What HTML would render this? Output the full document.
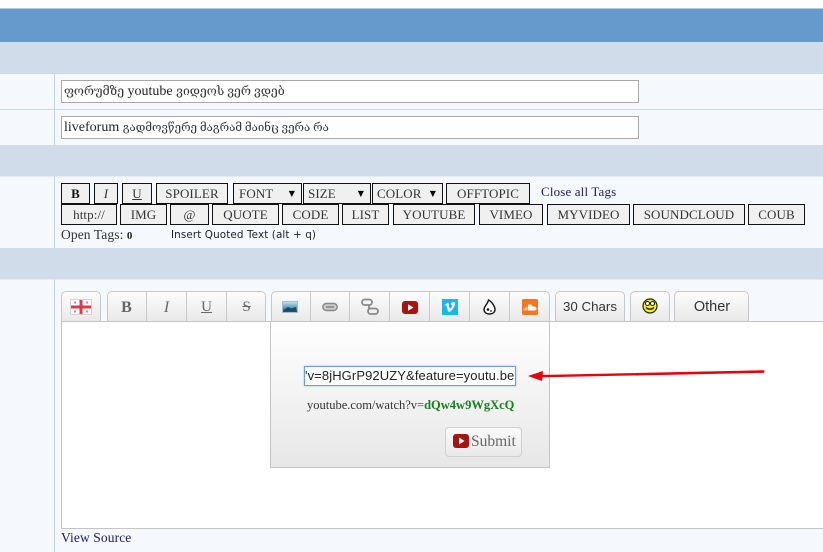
<!DOCTYPE html>
<html>
<head>
<meta charset="utf-8">
<style>
html,body{margin:0;padding:0;width:823px;height:552px;overflow:hidden;background:#fff}
body{position:relative;font-family:"Liberation Serif","DejaVu Serif","Noto Serif CJK SC",serif;color:#222}
div,span.a,svg.a{position:absolute;box-sizing:border-box}
.band{left:0;width:823px;background:#d1dceb}
.row{left:0;width:823px;background:#f5f9fd}
.inp{left:61px;width:578px;height:23px;background:#fff;border:1px solid #a9a9a9;font-size:14px;line-height:21px;padding-left:2px;color:#222;white-space:nowrap}
.inp span{font-size:12.2px;color:#333}
.btn{background:#f0f0f0;border:1px solid #111;font-size:13px;letter-spacing:.1px;color:#333;text-align:center;white-space:nowrap;height:21px;line-height:20px}
.sel{text-align:left;padding-left:5px}
.sel i{position:absolute;right:6px;top:0;font-style:normal;font-size:8px;color:#000;font-family:"DejaVu Sans",sans-serif}
.tab{top:291px;height:31px;background:linear-gradient(#fcfcfc,#e9e9e9);border:1px solid #c6c6c6;border-radius:5px 5px 0 0}
.dv{top:292px;width:1px;height:29px;background:#c9c9c9}
.tt{top:291px;height:30px;text-align:center;line-height:33px;color:#666}
</style>
</head>
<body>
<div style="left:0;top:8px;width:823px;height:1px;background:#b7cbe0"></div>
<div style="left:0;top:9px;width:823px;height:33px;background:#6699cc"></div>
<div class="band" style="top:42px;height:31px"></div>
<div class="row" style="top:73px;height:72px;border-top:1px solid #cdd8e7"></div>
<div style="left:0;top:109px;width:823px;height:1px;background:#cdd8e7"></div>
<div class="band" style="top:145px;height:31px"></div>
<div class="row" style="top:176px;height:72px;border-top:1px solid #e4ebf4"></div>
<div class="band" style="top:248px;height:31px"></div>
<div class="row" style="top:279px;height:273px;border-top:1px solid #e4ebf4"></div>
<div style="left:54px;top:73px;width:1px;height:72px;background:#c6d2e4"></div>
<div style="left:54px;top:176px;width:1px;height:72px;background:#c6d2e4"></div>
<div style="left:54px;top:279px;width:1px;height:273px;background:#c6d2e4"></div>

<div class="inp" style="top:80px"><span>ფორუმზე</span> youtube <span>ვიდეოს ვერ ვდებ</span></div>
<div class="inp" style="top:116px">liveforum <span style="font-size:11.5px">გადმოვწერე მაგრამ მაინც ვერა რა</span></div>

<div class="btn" style="left:61px;top:183px;width:29px;font-weight:bold;font-size:13px;color:#111">B</div>
<div class="btn" style="left:94px;top:183px;width:24px;font-style:italic">I</div>
<div class="btn" style="left:122px;top:183px;width:30px;text-decoration:underline">U</div>
<div class="btn" style="left:156px;top:183px;width:72px">SPOILER</div>
<div class="btn sel" style="left:233px;top:183px;width:69px">FONT<i>▼</i></div>
<div class="btn sel" style="left:303px;top:183px;width:68px;padding-left:4px">SIZE<i>▼</i></div>
<div class="btn sel" style="left:372px;top:183px;width:71px;padding-left:4px">COLOR<i>▼</i></div>
<div class="btn" style="left:446px;top:183px;width:84px">OFFTOPIC</div>
<div style="left:541px;top:184px;font-size:13px;letter-spacing:.15px;color:#1c1a6b;line-height:15px;white-space:nowrap">Close all Tags</div>

<div class="btn" style="left:61px;top:204px;width:56px">http://</div>
<div class="btn" style="left:120px;top:204px;width:47px">IMG</div>
<div class="btn" style="left:170px;top:204px;width:39px">@</div>
<div class="btn" style="left:212px;top:204px;width:67px">QUOTE</div>
<div class="btn" style="left:282px;top:204px;width:57px">CODE</div>
<div class="btn" style="left:342px;top:204px;width:47px">LIST</div>
<div class="btn" style="left:393px;top:204px;width:82px">YOUTUBE</div>
<div class="btn" style="left:479px;top:204px;width:64px">VIMEO</div>
<div class="btn" style="left:547px;top:204px;width:83px">MYVIDEO</div>
<div class="btn" style="left:633px;top:204px;width:112px">SOUNDCLOUD</div>
<div class="btn" style="left:748px;top:204px;width:57px">COUB</div>
<div style="left:61px;top:227px;font-size:13.5px;letter-spacing:.1px;line-height:15px;color:#333;white-space:nowrap">Open Tags: <b style="font-size:11px;color:#222">0</b></div>
<div style="left:171px;top:228px;font-size:10.4px;line-height:14px;color:#222;white-space:nowrap;font-family:'DejaVu Sans',sans-serif;letter-spacing:.1px">Insert Quoted Text (alt + q)</div>

<!-- editor -->
<div style="left:61px;top:321px;width:770px;height:208px;background:#fff;border:1px solid #c4c4c4"></div>

<div class="tab" style="left:61px;width:40px"></div>
<div class="tab" style="left:107px;width:159px"></div>
<div class="tab" style="left:271px;width:279px"></div>
<div class="tab" style="left:555px;width:70px"></div>
<div class="tab" style="left:630px;width:40px"></div>
<div class="tab" style="left:674px;width:75px"></div>
<div style="left:61px;top:321px;width:762px;height:1px;background:#c4c4c4"></div>

<div class="dv" style="left:146px"></div>
<div class="dv" style="left:186px"></div>
<div class="dv" style="left:226px"></div>
<div class="dv" style="left:310px"></div>
<div class="dv" style="left:349px"></div>
<div class="dv" style="left:389px"></div>
<div class="dv" style="left:429px"></div>
<div class="dv" style="left:469px"></div>
<div class="dv" style="left:509px"></div>

<!-- flag -->
<svg class="a" style="left:70px;top:299px" width="22" height="16" viewBox="0 0 22 16">
<rect x=".5" y=".5" width="21" height="15" fill="#fff" stroke="#d5d5d5"/>
<rect x="9.5" y="1" width="3" height="14" fill="#e23a44"/>
<rect x="1" y="6.5" width="20" height="3" fill="#e23a44"/>
<rect x="4" y="2.5" width="2" height="2" fill="#ec7a80"/><rect x="16" y="2.5" width="2" height="2" fill="#ec7a80"/>
<rect x="4" y="11.5" width="2" height="2" fill="#ec7a80"/><rect x="16" y="11.5" width="2" height="2" fill="#ec7a80"/>
</svg>

<div class="tt" style="left:107px;width:39px;font-weight:bold;font-size:16px">B</div>
<div class="tt" style="left:147px;width:39px;font-style:italic;font-size:16px">I</div>
<div class="tt" style="left:187px;width:39px;font-size:15px;text-decoration:underline">U</div>
<div class="tt" style="left:227px;width:39px;font-size:15px;text-decoration:line-through">S</div>

<!-- image icon -->
<svg class="a" style="left:282px;top:301px" width="16" height="12" viewBox="0 0 16 12">
<defs><linearGradient id="g" x1="0" y1="0" x2="0" y2="1"><stop offset="0" stop-color="#cfe6f2"/><stop offset=".55" stop-color="#5d9ab8"/><stop offset="1" stop-color="#123f5c"/></linearGradient></defs>
<rect x=".5" y=".5" width="15" height="11" fill="url(#g)" stroke="#9fc0d2"/>
<path d="M2 9 L6 6 L9 7.5 L14 6 V10 H2Z" fill="#1c4a66"/>
</svg>
<!-- link -->
<svg class="a" style="left:322px;top:302px" width="16" height="10" viewBox="0 0 16 10" fill="#ccc" stroke="#888" stroke-width="1.4">
<rect x=".8" y="1.5" width="14.4" height="7" rx="3.5"/><path d="M4 5H12" stroke-width="1.6"/>
</svg>
<!-- unlink -->
<svg class="a" style="left:361px;top:298px" width="18" height="18" viewBox="0 0 18 18" fill="none" stroke="#8a8a8a" stroke-width="1.8">
<rect x="1" y="1.5" width="10" height="5.5" rx="2.7"/><rect x="7" y="10.5" width="10" height="5.5" rx="2.7"/>
<path d="M8 7.5V10.5"/>
</svg>
<!-- youtube -->
<svg class="a" style="left:402px;top:301px" width="16" height="13" viewBox="0 0 16 13">
<rect width="16" height="13" rx="3" fill="#a8130f"/>
<path d="M6 3.2 L11.5 6.5 L6 9.8Z" fill="#fff"/>
</svg>
<!-- vimeo -->
<svg class="a" style="left:442px;top:299px" width="16" height="16" viewBox="0 0 16 16">
<rect width="16" height="16" fill="#1ab7ea"/>
<path d="M2.8 6 C4.3 4.4 5.6 3.4 6.3 4 C7 5 6.9 7.6 7.5 9 C8 10.2 8.6 9.8 9.6 8.2 C10.6 6.6 10.6 5.6 9.6 5.6 C9.2 5.6 8.9 5.8 8.7 5.9 C9.3 3.6 10.8 2.8 12 3.1 C13.4 3.5 13.5 5.2 12.4 7.2 C11.2 9.4 9.4 11.9 7.8 12.6 C6.6 13.1 6 12.2 5.6 11 C5 9.2 4.8 7.4 4.3 6.4 C4 5.9 3.7 6.3 3.2 6.6Z" fill="#fff"/>
</svg>
<!-- drop -->
<svg class="a" style="left:483px;top:299px" width="13" height="16" viewBox="0 0 13 16">
<path d="M5.5 1 C8 2 12 7 12 10.5 C12 13.5 9.5 15 6.5 15 C3.5 15 1 13.5 1 10.5 C1 7.5 4.5 5.5 5.5 1Z" fill="#fff" stroke="#111" stroke-width="1.4"/>
<circle cx="5" cy="10.5" r="1.3" fill="#111"/><circle cx="8" cy="12" r=".9" fill="#111"/>
</svg>
<!-- soundcloud -->
<svg class="a" style="left:522px;top:299px" width="16" height="16" viewBox="0 0 16 16">
<rect width="16" height="16" rx="1.5" fill="#f4761f"/>
<path d="M1.5 11.5 V9.5 H2.3 V11.5Z M3 11.5 V8.5 H3.8 V11.5Z M4.5 11.5 V7.5 H5.3 V11.5Z M6 11.5 V6 C7 5 10 5 10.8 7.6 C12.6 7 14.6 8.2 14.6 9.8 C14.6 11 13.6 11.5 12.6 11.5Z" fill="#fff"/>
</svg>

<div class="tt" style="left:555px;width:70px;font-family:'Liberation Sans',sans-serif;font-size:13.3px;color:#333;line-height:31px">30 Chars</div>
<svg class="a" style="left:642px;top:298px" width="16" height="16" viewBox="0 0 16 16">
<circle cx="8" cy="8" r="7" fill="#f4f000" stroke="#222" stroke-width="1.2"/>
<circle cx="5.5" cy="5.5" r="2" fill="#fff" stroke="#111"/><circle cx="10.5" cy="5.5" r="2" fill="#fff" stroke="#111"/>
<path d="M4 9.5 Q8 13 12 9.5" fill="none" stroke="#111" stroke-width="1.2"/>
</svg>
<div class="tt" style="left:674px;width:76px;font-family:'Liberation Sans',sans-serif;font-size:14.5px;color:#333;line-height:32px">Other</div>

<!-- popup -->
<div style="left:270px;top:322px;width:280px;height:146px;background:linear-gradient(#fff,#e7e7e7);border:1px solid #c4c4c4;border-top:0"></div>
<div style="left:304px;top:366px;width:212px;height:20px;background:#fff;border:1px solid #6f9ee0;box-shadow:0 0 2px #9dc0ee;overflow:hidden;font-family:'Liberation Sans',sans-serif;font-size:13px;letter-spacing:.1px;line-height:18px;color:#222;white-space:nowrap;text-align:left;padding-left:0"><span>'v=8jHGrP92UZY&amp;feature=youtu.be</span></div>
<div style="left:307px;top:398px;font-size:12.5px;line-height:14px;color:#333;white-space:nowrap">youtube.com/watch?v=<b style="color:#17811c">dQw4w9WgXcQ</b></div>
<div style="left:445px;top:427px;width:77px;height:30px;border:1px solid #cfcfcf;border-radius:4px;background:linear-gradient(#fafafa,#e9e9e9)"></div>
<svg class="a" style="left:453px;top:434px" width="16" height="14" viewBox="0 0 16 14">
<rect width="16" height="14" rx="3" fill="#a8130f"/>
<path d="M6 3.5 L11.5 7 L6 10.5Z" fill="#fff"/>
</svg>
<div style="left:471px;top:433px;font-size:15.5px;line-height:18px;color:#666;white-space:nowrap">Submit</div>

<!-- arrow -->
<svg class="a" style="left:520px;top:362px" width="250" height="22" viewBox="0 0 250 22">
<path d="M244 8.6 L20 13.4 L20 15 L244 10.4Z" fill="#e8000b" stroke="#e8000b" stroke-width=".8" stroke-linejoin="round"/>
<path d="M8 14 L23 9 L22 19Z" fill="#e8000b"/>
</svg>

<div style="left:61px;top:530px;font-size:13.5px;letter-spacing:.1px;line-height:15px;color:#1c1a6b;white-space:nowrap">View Source</div>
</body>
</html>
